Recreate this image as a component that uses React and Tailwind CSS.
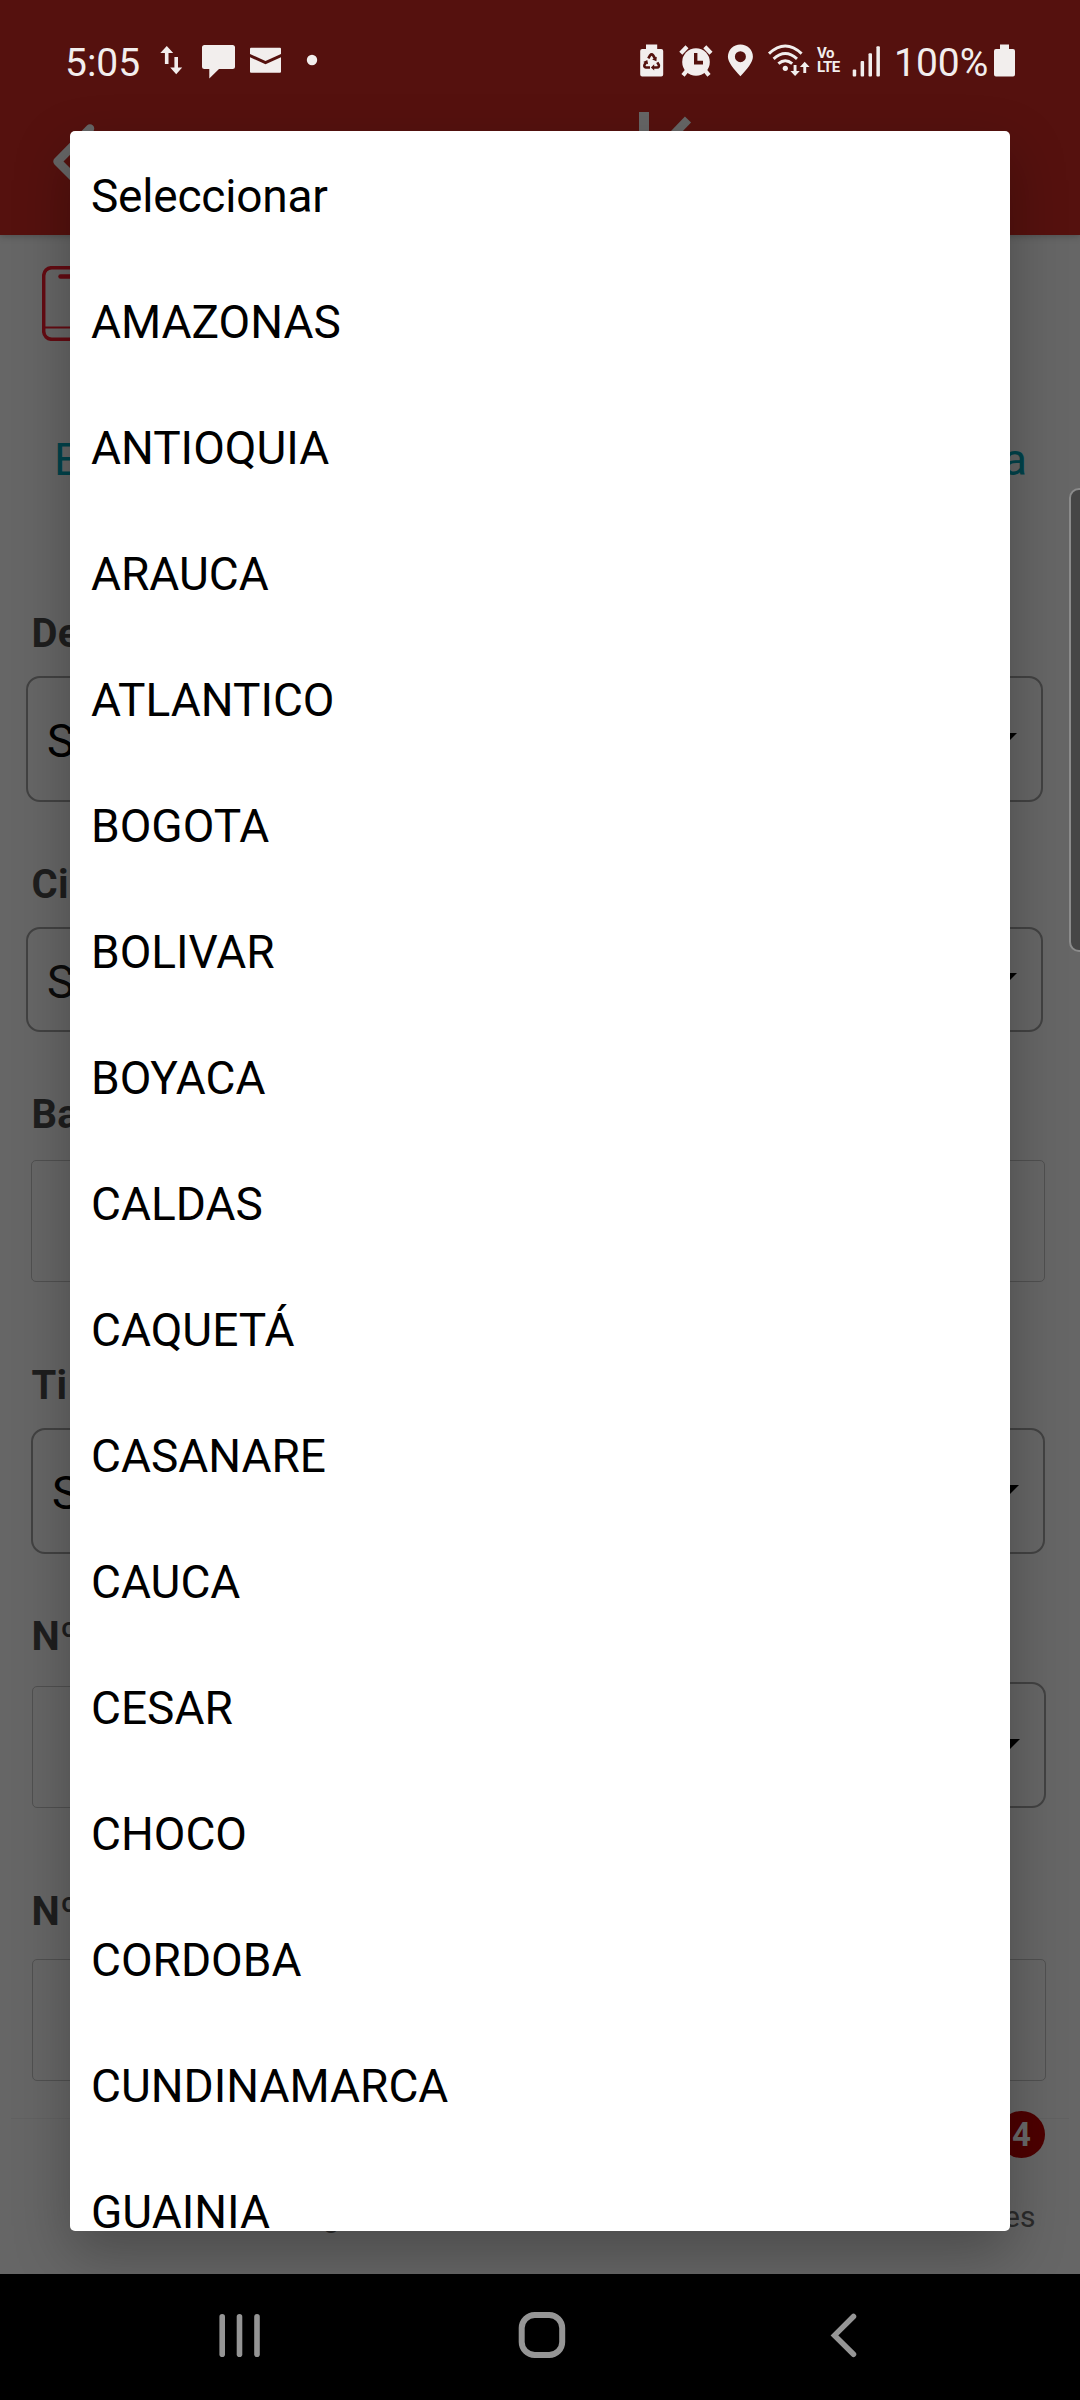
import React from "react";

const DEPARTMENTS = [
  "Seleccionar", "AMAZONAS", "ANTIOQUIA", "ARAUCA", "ATLANTICO", "BOGOTA",
  "BOLIVAR", "BOYACA", "CALDAS", "CAQUETÁ", "CASANARE", "CAUCA", "CESAR",
  "CHOCO", "CORDOBA", "CUNDINAMARCA", "GUAINIA",
];

const INK = "#f2eeed";

function StatusBar() {
  return (
    <div className="flex h-[112px] w-full items-start pt-[40px] text-[#f2eeed]">
      <span className="ml-[65px] mt-[1px] w-[90px] text-[39px] leading-[44px]">5:05</span>
      <svg className="h-[44px] w-[170px]" viewBox="155 40 170 44" fill={INK}>
        <path d="M166.8 46l6.4 7h-4.7v11h-3.6V53h-4.6z" />
        <path d="M176.2 74.3l6-6.8h-4.2V57h-3.6v10.500h-4.200z" />
        <path d="M204.500 45h28q2.500 0 2.500 2.500v19q0 2.500-2.500 2.500H219l-9.700 9.500V69h-4.800q-2.500 0-2.500-2.500v-19q0-2.500 2.500-2.500z" />
        <path d="M251 47.700h29q1 0 1 1v5.300l-15.500 7-15.500-7v-5.300q0-1 1-1z" />
        <path d="M250 57.200l15.500 7 15.500-7v14.500q0 1-1 1h-29q-1 0-1-1z" />
        <circle cx="312" cy="60" r="5.200" />
      </svg>
      <svg className="ml-[310px] h-[44px] w-[180px]" viewBox="635 40 180 44" fill={INK}>
        {/* battery protection */}
        <path d="M646 44.500h11.200V49h4q2 0 2 2v23.500q0 2-2 2h-19q-2 0-2-2V51q0-2 2-2H646z" />
        <g stroke="#53110d" fill="none" strokeWidth="2.600">
          <path d="M648.300 58.300l1.800-3q1.500-1.800 3 0l1.900 3.200" />
          <path d="M657.300 62.300l1.500 2.600q.6 2.300-1.700 2.600h-3.600" />
          <path d="M650 67.500h-4q-2.300-.4-1.500-2.600l1.800-3" />
        </g>
        <g fill="#53110d">
          <path d="M656.800 56.800l-.4 4.400-4.200-1.800z" />
          <path d="M654.200 64.200v6.200l-3.300-3z" />
          <path d="M643.200 62l4.100-2.100.8 4.400z" />
        </g>
        {/* alarm */}
        <g stroke={INK} strokeWidth="4.200">
          <path d="M680.800 53.300l6.200-6.500M704.800 46.800l6.200 6.500M687 70.500l-4 4.800M705 70.500l4 4.800" />
        </g>
        <circle cx="696" cy="62" r="13.800" />
        <path d="M694 53h3.400v7.800h5.600v3.700h-9z" fill="#53110d" />
        {/* location */}
        <path fillRule="evenodd" d="M740.400 44.500c7 0 12.500 5.300 12.500 12.200 0 5.500-5.500 11.800-12.500 19.600-7-7.800-12.500-14.100-12.500-19.600 0-6.900 5.500-12.200 12.500-12.200zM740.400 51.200a5.500 5.500 0 1 0 0 11 5.500 5.500 0 1 0 0-11z" />
        {/* wifi */}
        <g fill="none" stroke={INK} strokeWidth="3">
          <path d="M769 53.600q16.300-15.200 32.600 0" />
          <path d="M773.600 58.800q11.700-10.600 23.400 0" />
          <path d="M778.400 63.700q6.900-6 13.800 0" />
        </g>
        <circle cx="785.300" cy="68.300" r="2.600" />
        <path d="M793.600 65h2.900v6h3.300l-4.700 5-4.700-5h3.200z" />
        <path d="M803.300 73h2.900v-6h3.400l-4.900-5.300-4.800 5.300h3.400z" />
      </svg>
      <div className="ml-[2px] mt-[6px] flex w-[32px] flex-col text-[15px] font-bold leading-[14px]">
        <span className="tracking-[-0.5px]">Vo</span>
        <span className="tracking-[-0.5px]">LTE</span>
      </div>
      <svg className="ml-[1px] h-[44px] w-[35px]" viewBox="850 40 35 44" fill={INK}>
        <rect x="852.700" y="69.500" width="3.500" height="7" rx="1" />
        <rect x="860.600" y="61" width="3.500" height="15.500" rx="1" />
        <rect x="868.500" y="53.300" width="3.500" height="23.200" rx="1" />
        <rect x="876.400" y="46.300" width="3.500" height="30.200" rx="1" />
      </svg>
      <span className="ml-[9px] mt-[1px] w-[97px] text-[39px] leading-[44px]">100%</span>
      <svg className="ml-[1px] h-[44px] w-[26px]" viewBox="992 40 26 44" fill={INK}>
        <path d="M1000 44.500h9V49h4q2 0 2 2v23.500q0 2-2 2h-17q-2 0-2-2V51q0-2 2-2h4z" />
      </svg>
    </div>
  );
}

function Header() {
  return (
    <header className="flex h-[235px] w-full shrink-0 flex-col bg-[#55110e] shadow-[0_1px_7px_rgba(0,0,0,0.25)]">
      <StatusBar />
      <div className="flex">
        <svg className="ml-[48px] h-[100px] w-[60px]" viewBox="48 112 60 100">
          <path d="M90 128.500L57.500 161.500 90 194" fill="none" stroke="#666" strokeWidth="8.500" strokeLinecap="round" strokeLinejoin="round" />
        </svg>
        <svg className="ml-[527px] h-[60px] w-[70px]" viewBox="635 112 70 60">
          <path d="M639 112h10v60h-10z" fill="#666" />
          <path d="M688 119.500L650 159" stroke="#666" strokeWidth="8.500" />
        </svg>
      </div>
    </header>
  );
}

function Label({ children, className }) {
  return (
    <div className={`ml-[31.500px] h-[40px] text-[40px] font-bold leading-[42px] tracking-[0.3px] text-[#1e1e1e] ${className}`}>
      {children}
    </div>
  );
}

function Arrow() {
  return (
    <svg className="h-[13px] w-[26px]" viewBox="0 0 26 13">
      <path d="M0 0h26L13 13z" fill="#000" />
    </svg>
  );
}

function Select({ className, inner }) {
  return (
    <div className={`flex items-center justify-between rounded-[14px] border-2 border-[#424242] ${className}`}>
      <span className={`text-[46px] leading-[60px] ${inner || ""}`}>S</span>
      <Arrow />
    </div>
  );
}

function Form() {
  return (
    <main className="flex flex-col">
      <svg className="ml-[42px] mt-[31px] h-[75px] w-[60px] shrink-0" viewBox="0 0 60 75" fill="none" stroke="#640b12" strokeWidth="3.500">
        <rect x="1.700" y="1.700" width="56.600" height="71.600" rx="8" />
        <path d="M2 61.500h56" strokeWidth="2.200" />
        <path d="M18.500 10.500h24" strokeWidth="4.500" strokeLinecap="round" />
      </svg>
      <div className="ml-[54px] mr-[53px] mt-[91px] flex h-[54px] justify-between text-[45px] leading-[55px] text-[#00434b]">
        <span>E</span>
        <span>a</span>
      </div>

      <Label className="mt-[127px]">De</Label>
      <Select className="ml-[26px] mr-[37px] mt-[23px] h-[126px] pl-[19px] pr-[24px]" inner="mt-[4px]" />

      <Label className="mt-[62px]">Ci</Label>
      <Select className="ml-[26px] mr-[37px] mt-[23px] h-[105px] pl-[19px] pr-[24px] text-[#0b0b0b]" inner="mt-[4px]" />

      <Label className="mt-[62px]">Ba</Label>
      <div className="ml-[31px] mr-[35px] mt-[26px] h-[122px] rounded-[5px] border border-[#505050]" />

      <Label className="mt-[83px]">Ti</Label>
      <Select className="ml-[31px] mr-[35px] mt-[23px] h-[126px] pl-[19px] pr-[24px]" inner="mt-[4px]" />

      <Label className="mt-[62px]">Nº</Label>
      <div className="ml-[32px] mr-[34px] mt-[26px] flex h-[126px] items-end justify-between">
        <div className="h-[122px] w-[480px] rounded-[5px] border border-[#505050]" />
        <Select className="h-[126px] w-[480px] pl-[19px] pr-[24px]" />
      </div>

      <Label className="mt-[83px]">Nº</Label>
      <div className="ml-[32px] mr-[34px] mt-[28px] h-[122px] rounded-[5px] border border-[#505050]" />

      <div className="mx-[11px] mt-[37px] h-px bg-[#616161]" />
      <div className="mr-[35px] mt-[-8px] flex justify-end">
        <span className="flex size-[47px] items-center justify-center rounded-full bg-[#4d0000] text-[33px] font-bold leading-none text-[#6a6a6a]">4</span>
      </div>
      <div className="ml-[323px] mr-[44.500px] mt-[41px] flex justify-between text-[30px] leading-[36px] text-[#2b2b2b]">
        <span>g</span>
        <span>es</span>
      </div>
    </main>
  );
}

function NavBar() {
  return (
    <nav className="absolute inset-x-0 bottom-0 flex h-[126px] items-center bg-black">
      <svg className="ml-[214px] h-[60px] w-[50px]" viewBox="214 2307 50 60" fill="#959595">
        <rect x="219.400" y="2314" width="5.600" height="43" rx="2.800" />
        <rect x="236.700" y="2314" width="5.600" height="43" rx="2.800" />
        <rect x="254.200" y="2314" width="5.600" height="43" rx="2.800" />
      </svg>
      <svg className="ml-[246px] h-[60px] w-[64px]" viewBox="510 2307 64 60" fill="none" stroke="#959595" strokeWidth="6">
        <rect x="521.700" y="2315" width="40.500" height="40" rx="13" />
      </svg>
      <svg className="ml-[248px] h-[60px] w-[44px]" viewBox="822 2307 44 60" fill="none" stroke="#959595" strokeWidth="5.500" strokeLinecap="round">
        <path d="M853.500 2316.500L834.500 2335.400l19 18.900" />
      </svg>
    </nav>
  );
}

export default function App() {
  return (
    <div className="relative flex h-[2400px] w-[1080px] flex-col overflow-hidden bg-[#666] font-['Roboto',sans-serif]">
      <Header />
      <Form />
      <ul className="absolute left-[70px] top-[131px] h-[2100px] w-[940px] overflow-hidden rounded-[5px] bg-white shadow-[0_22px_56px_rgba(0,0,0,0.27)]">
        {DEPARTMENTS.map((name, i) => (
          <li
            key={name}
            className={`flex h-[126px] items-center pl-[21px] pt-[4px] text-[46px] leading-[54px] text-black ${i === 0 ? "tracking-[-0.2px]" : ""}`}
          >
            {name}
          </li>
        ))}
      </ul>
      <div className="absolute right-[-12px] top-[488px] h-[464px] w-[23px] rounded-[10px] border-2 border-[#8b8b8b] bg-[#464646]" />
      <NavBar />
    </div>
  );
}
